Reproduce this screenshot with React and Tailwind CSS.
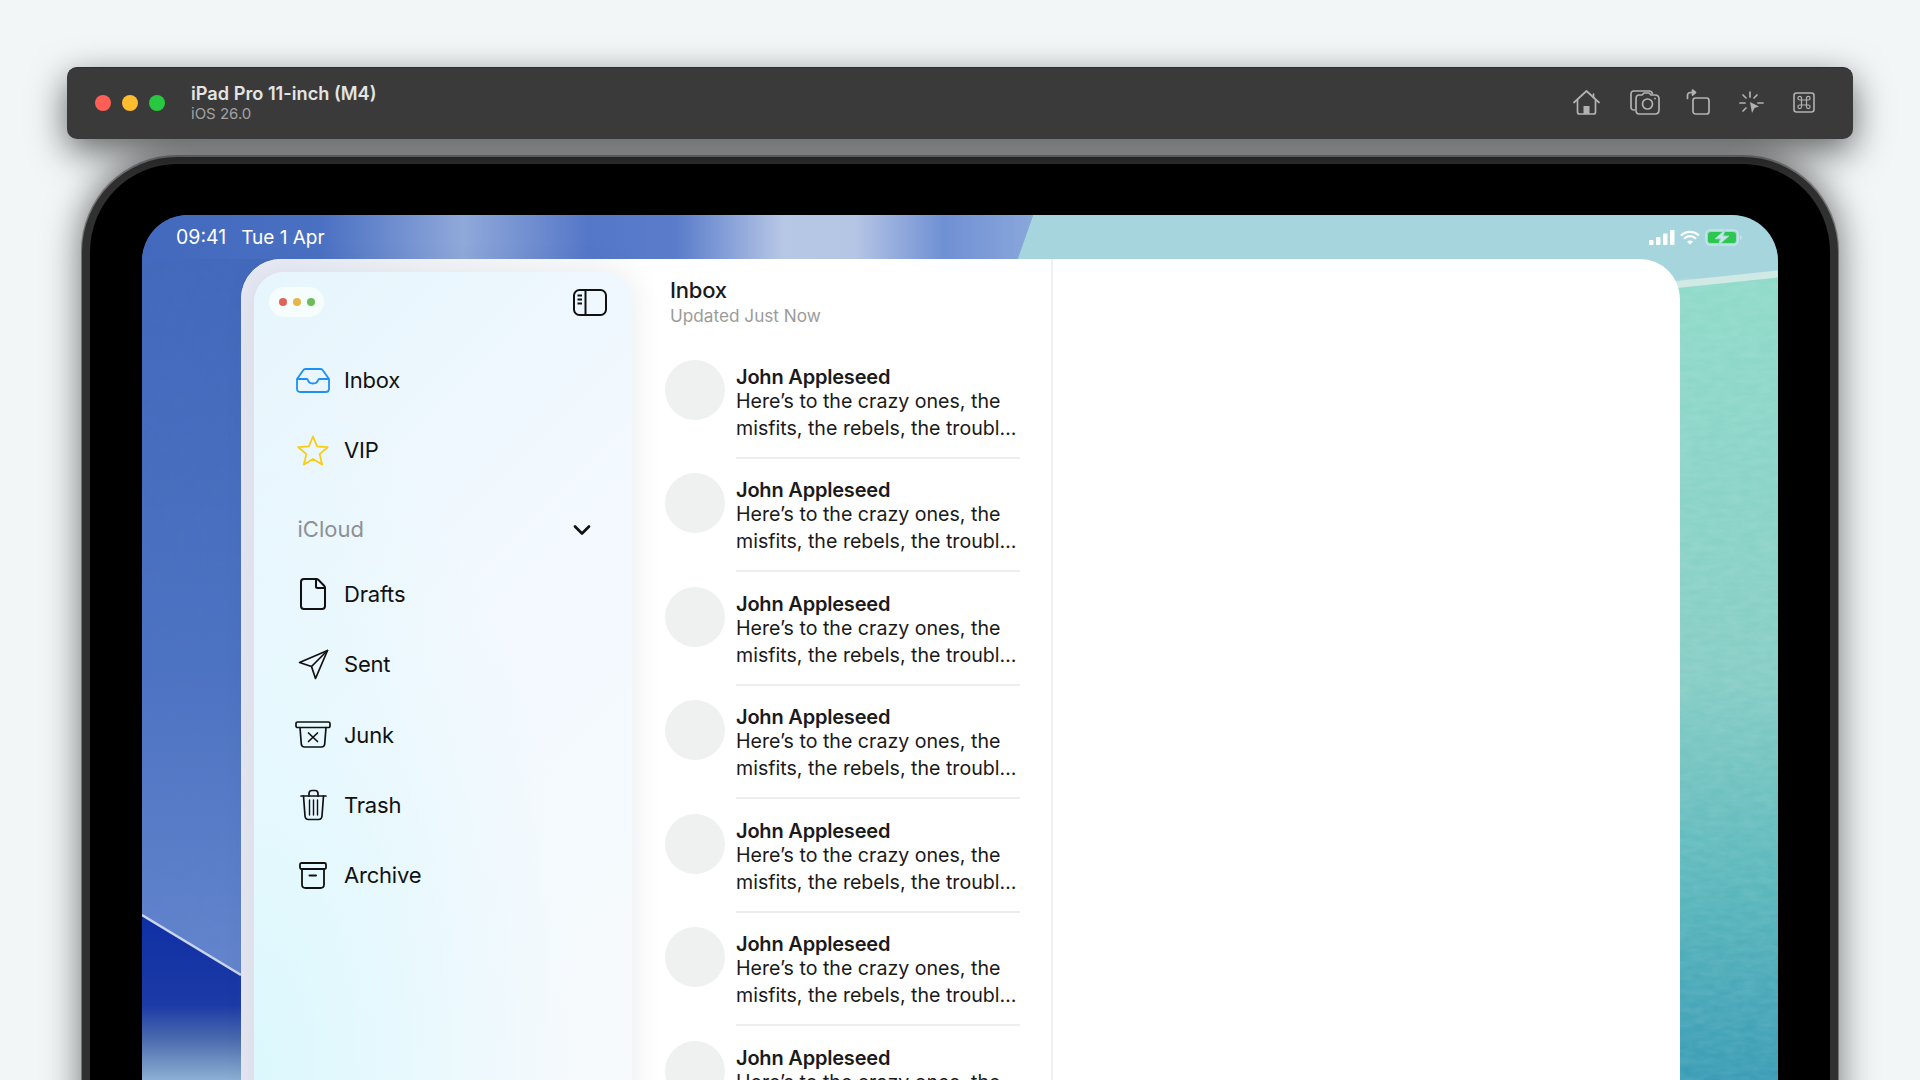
import { ChevronDown, File } from 'lucide-react'

const FONT = "font-['Inter','Noto_Sans',sans-serif]"

// sidebar icons that lucide has no close match for
function InboxIcon() {
  return (
    <svg width="34" height="25" viewBox="0 0 34 25" fill="none" stroke="#1e90f5" strokeWidth="1.8" strokeLinejoin="round">
      <path d="M1 11 7 2.400Q7.800 1 9.600 1H24.400Q26.200 1 27 2.400L33 11V20.700Q33 24 29.700 24H4.300Q1 24 1 20.700Z" />
      <path d="M1 11H10.500Q11.600 11 12 12.300 12.900 15.500 17 15.500T22 12.300Q22.400 11 23.500 11H33" />
    </svg>
  )
}

function StarIcon() {
  return (
    <svg width="32" height="31" viewBox="0 0 32 31" fill="none" stroke="#f9cc16" strokeWidth="1.800" strokeLinejoin="round">
      <path d="M16 1.500 20.110 11.340 30.740 12.210 22.660 19.160 25.110 29.540 16 24 6.890 29.540 9.340 19.160 1.260 12.210 11.890 11.340Z" />
    </svg>
  )
}

function SentIcon() {
  return (
    <svg width="31" height="31" viewBox="0 0 31 31" fill="none" stroke="#111" strokeWidth="1.700" strokeLinejoin="round" strokeLinecap="round">
      <path d="M29.500 1.500 1.500 13.500 13.500 17.500 17.500 29.500Z" />
      <path d="M13.500 17.500 29.500 1.500" />
    </svg>
  )
}

function JunkIcon() {
  return (
    <svg width="36" height="27" viewBox="0 0 36 27" fill="none" stroke="#111" strokeWidth="1.700" strokeLinejoin="round" strokeLinecap="round">
      <rect x="1" y="1" width="34" height="5.500" rx="1.600" />
      <path d="M5 6.500 6.300 23Q6.600 26 9.600 26H26.400Q29.400 26 29.700 23L31 6.500" />
      <path d="M13.500 12 22.500 20.500M22.500 12 13.500 20.500" />
    </svg>
  )
}

function TrashIcon() {
  return (
    <svg width="27" height="32" viewBox="0 0 27 32" fill="none" stroke="#111" strokeWidth="1.700" strokeLinejoin="round" strokeLinecap="round">
      <path d="M1 7H26" />
      <path d="M9 7V4.500Q9 1.500 12 1.500H15Q18 1.500 18 4.500V7" />
      <path d="M3.500 7 5 27Q5.300 30.500 8.500 30.500H18.500Q21.700 30.500 22 27L23.500 7" />
      <path d="M9.500 11V26M13.500 11V26M17.500 11V26" strokeWidth="1.400" />
    </svg>
  )
}

function ArchiveIcon() {
  return (
    <svg width="28" height="27" viewBox="0 0 28 27" fill="none" stroke="#111" strokeWidth="1.800" strokeLinejoin="round" strokeLinecap="round">
      <rect x="1" y="1" width="26" height="6" rx="1.500" />
      <path d="M3 7V22.500Q3 26 6.500 26H21.500Q25 26 25 22.500V7" />
      <path d="M10.500 13.500H17" strokeWidth="2" />
    </svg>
  )
}

const PANEL_ICON = (
  <svg width="34" height="27" viewBox="0 0 34 27" fill="none" stroke="#111" strokeWidth="2">
    <rect x="1" y="1" width="32" height="25" rx="5.500" />
    <path d="M12.500 1.500V25.500" />
    <path d="M4.500 6.500H9M4.500 10.500H9M4.500 14.500H9" strokeWidth="1.800" />
  </svg>
)

const MAILBOXES = [
  { label: 'Drafts', icon: <File size={36} strokeWidth={1.35} color="#111" /> },
  { label: 'Sent', icon: <SentIcon /> },
  { label: 'Junk', icon: <JunkIcon /> },
  { label: 'Trash', icon: <TrashIcon /> },
  { label: 'Archive', icon: <ArchiveIcon /> },
]

function SidebarRow({ icon, label }) {
  return (
    <div className="flex h-[70.300px] items-center">
      <div className="flex w-[38px] justify-center">{icon}</div>
      <span className="ml-[12px] text-[22px] leading-none tracking-[-0.2px] text-[#111]">{label}</span>
    </div>
  )
}

function Sidebar() {
  return (
    <aside className="relative z-10 w-[378px] shrink-0 rounded-t-[30px] bg-[radial-gradient(ellipse_at_0%_90%,#dcf8fd,transparent_60%),linear-gradient(135deg,#e6f5fc,#f3f9ff_45%,#f6fafb)] shadow-[0_0_30px_rgba(60,70,80,0.1)]">
      <div className="flex h-[60px] items-center justify-between pl-[15px] pr-[25px]">
        <div className="flex h-[30px] w-[55px] items-center justify-center gap-[6px] rounded-full bg-[#f6fdfd]">
          <span className="size-2 rounded-full bg-[#e0635a]" />
          <span className="size-2 rounded-full bg-[#e8b54a]" />
          <span className="size-2 rounded-full bg-[#6cbc58]" />
        </div>
        {PANEL_ICON}
      </div>
      <div className="mt-[13px] pl-[40px] pr-[36px]">
        <SidebarRow icon={<InboxIcon />} label="Inbox" />
        <SidebarRow icon={<StarIcon />} label="VIP" />
        <div className="flex h-[73.400px] items-center justify-between pl-[3.500px] pt-[14px]">
          <span className="text-[22px] leading-none text-[#8d9095]">iCloud</span>
          <ChevronDown className="mt-[2px]" size={28} strokeWidth={2.3} color="#111" />
        </div>
        {MAILBOXES.map((m) => (
          <SidebarRow key={m.label} icon={m.icon} label={m.label} />
        ))}
      </div>
    </aside>
  )
}

function MessageRow() {
  return (
    <div className="flex h-[113.600px]">
      <div className="mt-[4px] size-[60px] shrink-0 rounded-full bg-[#eff1f1]" />
      <div className="ml-[11px] w-[284px] pt-[10px] text-[#1a1a1a]">
        <div className="text-[20px] font-semibold leading-[22px] tracking-[-0.2px]">John Appleseed</div>
        <div className="text-[19.600px] leading-[27px]">Here’s to the crazy ones, the</div>
        <div className="text-[19.600px] leading-[27px]">misfits, the rebels, the troubl…</div>
        <div className="mt-[15px] h-0.5 bg-[#eeeeee]" />
      </div>
    </div>
  )
}

function Wallpaper() {
  return (
    <svg className="absolute inset-0 h-full w-full" viewBox="0 0 1636 900" preserveAspectRatio="none">
      <defs>
        <linearGradient id="blue" x1="0" y1="0" x2="1" y2="0">
          <stop offset="0" stopColor="#4269bd" />
          <stop offset="0.2" stopColor="#4a70c2" />
          <stop offset="0.36" stopColor="#90a9da" />
          <stop offset="0.5" stopColor="#5577c8" />
          <stop offset="0.6" stopColor="#5a7cca" />
          <stop offset="0.72" stopColor="#b7c7e6" />
          <stop offset="0.8" stopColor="#b5c5e4" />
          <stop offset="0.9" stopColor="#6f90d4" />
          <stop offset="1" stopColor="#8aa7db" />
        </linearGradient>
        <linearGradient id="blueLeft" x1="0" y1="0" x2="0" y2="1">
          <stop offset="0" stopColor="#4268bc" />
          <stop offset="0.5" stopColor="#4c72c2" />
          <stop offset="0.8" stopColor="#6183cc" />
          <stop offset="1" stopColor="#6a8ad0" />
        </linearGradient>
        <linearGradient id="navy" gradientUnits="userSpaceOnUse" x1="0" y1="700" x2="0" y2="865">
          <stop offset="0" stopColor="#0e2fa5" />
          <stop offset="0.55" stopColor="#1d3ba6" />
          <stop offset="0.75" stopColor="#4a6aae" />
          <stop offset="1" stopColor="#8cb0d2" />
        </linearGradient>
        <linearGradient id="teal" gradientUnits="userSpaceOnUse" x1="0" y1="60" x2="0" y2="865">
          <stop offset="0" stopColor="#90dbca" />
          <stop offset="0.5" stopColor="#86cdc5" />
          <stop offset="0.75" stopColor="#5cb8bc" />
          <stop offset="1" stopColor="#3a9cb5" />
        </linearGradient>
        <filter id="paper" x="0" y="0" width="100%" height="100%">
          <feTurbulence type="fractalNoise" baseFrequency="0.06 0.16" numOctaves="3" seed="4" />
          <feColorMatrix values="0 0 0 0 1  0 0 0 0 1  0 0 0 0 1  0.5 0 0 0 -0.12" />
        </filter>
        <filter id="grain" x="0" y="0" width="100%" height="100%">
          <feTurbulence type="fractalNoise" baseFrequency="0.09" numOctaves="3" seed="9" />
          <feColorMatrix values="0 0 0 0 0.1  0 0 0 0 0.2  0 0 0 0 0.5  0.7 0 0 0 -0.2" />
        </filter>
      </defs>
      <rect width="1636" height="900" fill="url(#blueLeft)" />
      <rect x="0" y="44" width="99" height="690" filter="url(#grain)" opacity="0.25" />
      <path d="M0 0H891L876 44H0Z" fill="url(#blue)" />
      <path d="M0 700 99 760V900H0Z" fill="url(#navy)" />
      <path d="M0 700 99 760" stroke="#c9d5e8" strokeWidth="2.500" fill="none" />
      <path d="M891 0H1636V72H866Z" fill="#a6d5dd" />
      <path d="M1530 70 1636 59V900H1530Z" fill="url(#teal)" />
      <path d="M1530 70 1636 59" stroke="#cfe9e4" strokeWidth="7" fill="none" />
      <path d="M1530 74 1636 63V900H1530Z" filter="url(#paper)" opacity="0.3" />
    </svg>
  )
}

function StatusBar() {
  return (
    <div className="relative flex h-[44px] items-center justify-between pl-[34px] pr-[36px] pt-[1px] text-white">
      <div className="flex items-center gap-[15px] leading-none">
        <span className="text-[19.500px]">09:41</span>
        <span className="text-[19px]">Tue 1 Apr</span>
      </div>
      <div className="flex items-center gap-[5px]">
        <svg width="26" height="15" viewBox="0 0 26 15" fill="#fff">
          <rect x="0" y="10" width="4.500" height="5" rx="1" />
          <rect x="7" y="7" width="4.500" height="8" rx="1" />
          <rect x="14" y="3.500" width="4.500" height="11.500" rx="1" />
          <rect x="21" y="0" width="4.500" height="15" rx="1" />
        </svg>
        <svg width="20" height="15" viewBox="0 0 20 15" fill="none" stroke="#fff" strokeWidth="2.200">
          <path d="M1 5.500C6 .6 14 .6 19 5.500" />
          <path d="M4 8.700C7.500 5.300 12.500 5.300 16 8.700" />
          <path d="M7 11.700C8.700 10.200 11.300 10.200 13 11.700L10 14.500Z" fill="#fff" stroke="none" />
        </svg>
        <svg width="37" height="17" viewBox="0 0 37 17">
          <rect x="1" y="1" width="32" height="15" rx="4.500" fill="none" stroke="#c4e6e8" strokeWidth="1.600" />
          <rect x="3" y="3" width="28" height="11" rx="2.800" fill="#2cc751" />
          <path d="M35 6V11C36.300 10.500 36.800 9.500 36.800 8.500S36.300 6.500 35 6Z" fill="#c4e6e8" />
          <path d="M20.500 .5 10 9.800H15.500L13 16.500 24 7H18Z" fill="#c4e6e8" stroke="#a6d5dd" strokeWidth="0.800" />
        </svg>
      </div>
    </div>
  )
}

function SimulatorToolbar() {
  return (
    <header className="relative z-10 flex h-[72px] items-center rounded-[10px] border-t border-[#2e2e2e] bg-[#3a3a3a] pb-[2px] pl-[28px] pr-[38px] shadow-[0_12px_36px_rgba(0,0,0,0.6)]">
      <div className="flex gap-[11px]">
        <span className="size-4 rounded-full bg-[#ff5f57]" />
        <span className="size-4 rounded-full bg-[#febc2e]" />
        <span className="size-4 rounded-full bg-[#28c840]" />
      </div>
      <div className="ml-[26px] flex flex-col">
        <span className="text-[18.200px] font-semibold leading-[20px] text-[#e4e4e4]">iPad Pro 11-inch (M4)</span>
        <span className="mt-[2px] text-[15px] leading-[18px] text-[#a2a2a2]">iOS 26.0</span>
      </div>
      <div className="ml-auto flex items-center">
        <svg width="27" height="25" viewBox="0 0 27 25" fill="none" stroke="#b2b2b2" strokeWidth="1.700" strokeLinejoin="round" strokeLinecap="round">
          <path d="M1 12.500 13.500 1 26 12.500" />
          <path d="M20.500 4V7.500" />
          <path d="M4.500 10V22Q4.500 24 6.500 24H20.500Q22.500 24 22.500 22V10" />
          <rect x="10.500" y="16" width="6" height="8" fill="#b2b2b2" stroke="none" />
        </svg>
        <svg className="ml-[30px]" width="30" height="25" viewBox="0 0 30 25" fill="none" stroke="#b2b2b2" strokeWidth="1.700" strokeLinejoin="round">
          <path d="M5 20H4Q1 20 1 17V4Q1 1 4 1H19Q22 1 22.500 4" />
          <path d="M9 5H12L14 3H19L21 5H25Q29 5 29 9V20Q29 24 25 24H9Q6 24 6 20V9Q6 5 9 5Z" />
          <circle cx="17.500" cy="14" r="5" />
          <circle cx="25" cy="8.500" r="0.900" fill="#b2b2b2" stroke="none" />
        </svg>
        <svg className="-mt-[2px] ml-[26px]" width="24" height="26" viewBox="0 0 24 26" fill="none" stroke="#b2b2b2" strokeWidth="1.700" strokeLinecap="round" strokeLinejoin="round">
          <rect x="7" y="9" width="16" height="16" rx="2.500" />
          <path d="M1.500 9.500V6.500Q1.500 3.500 4.500 3.500H7" />
          <path d="M6.500 1 9.500 3.500 6.500 6Z" fill="#b2b2b2" />
        </svg>
        <svg className="ml-[29px]" width="25" height="24" viewBox="0 0 25 24" fill="none" stroke="#b2b2b2" strokeWidth="1.700" strokeLinecap="round">
          <path d="M11 1V6M4 4 7 7M1 12H6M4 20 7 17M18 4 15 7M24 12H19" />
          <path d="M11 11 20 15.500 15.500 17 13 22Z" fill="#b2b2b2" stroke="none" />
        </svg>
        <svg className="ml-[29px]" width="22" height="21" viewBox="0 0 22 21" fill="none" stroke="#b2b2b2" strokeWidth="1.600">
          <rect x="1" y="1" width="20" height="19" rx="2.500" />
          <path d="M8.500 8H13.500V13H8.500ZM8.500 8V6.500A1.800 1.800 0 1 0 6.700 8H15.300A1.800 1.800 0 1 0 13.500 6.200V14.800A1.800 1.800 0 1 0 15.300 13H6.700A1.800 1.800 0 1 0 8.500 14.800Z" strokeWidth="1.200" />
        </svg>
      </div>
    </header>
  )
}

export default function App() {
  return (
    <div className={`h-[1080px] overflow-hidden bg-[#f2f6f7] px-[67px] pt-[67px] ${FONT}`}>
      <SimulatorToolbar />
      <div className="mx-[14px] mt-[16px] h-[1000px] rounded-t-[96px] bg-[#757575] px-[1px] pt-[2px] shadow-[0_-4px_36px_rgba(0,0,0,0.55)]">
        <div className="h-full rounded-t-[95px] border-x-[8px] border-t-[7px] border-[#303030] bg-black px-[52px] pt-[51px]">
          <div className="relative h-[900px] overflow-hidden rounded-t-[46px]">
            <Wallpaper />
            <StatusBar />
            <div className="relative ml-[99px] flex h-[900px] w-[1439px] rounded-t-[40px] bg-white">
              <div className="absolute inset-y-0 left-0 w-[420px] rounded-tl-[40px] bg-gradient-to-r from-[#e6e9f4] via-[#f4f6f9] to-white" />
              <div className="ml-[13px] mt-[13px] flex">
                <Sidebar />
              </div>
              <main className="relative flex-1">
                <div className="h-full w-[421px] border-r-2 border-[#f0f0f0] pl-[33px]">
                  <div className="pl-[5px] pt-[18px]">
                    <div className="text-[22px] font-medium leading-[27px] tracking-[-0.2px] text-[#1a1a1a]">Inbox</div>
                    <div className="mt-[1px] text-[17.200px] leading-[22px] text-[#9b9b9b]">Updated Just Now</div>
                  </div>
                  <div className="mt-[28.500px]">
                    {[0, 1, 2, 3, 4, 5, 6].map((i) => (
                      <MessageRow key={i} />
                    ))}
                  </div>
                </div>
              </main>
            </div>
          </div>
        </div>
      </div>
    </div>
  )
}
